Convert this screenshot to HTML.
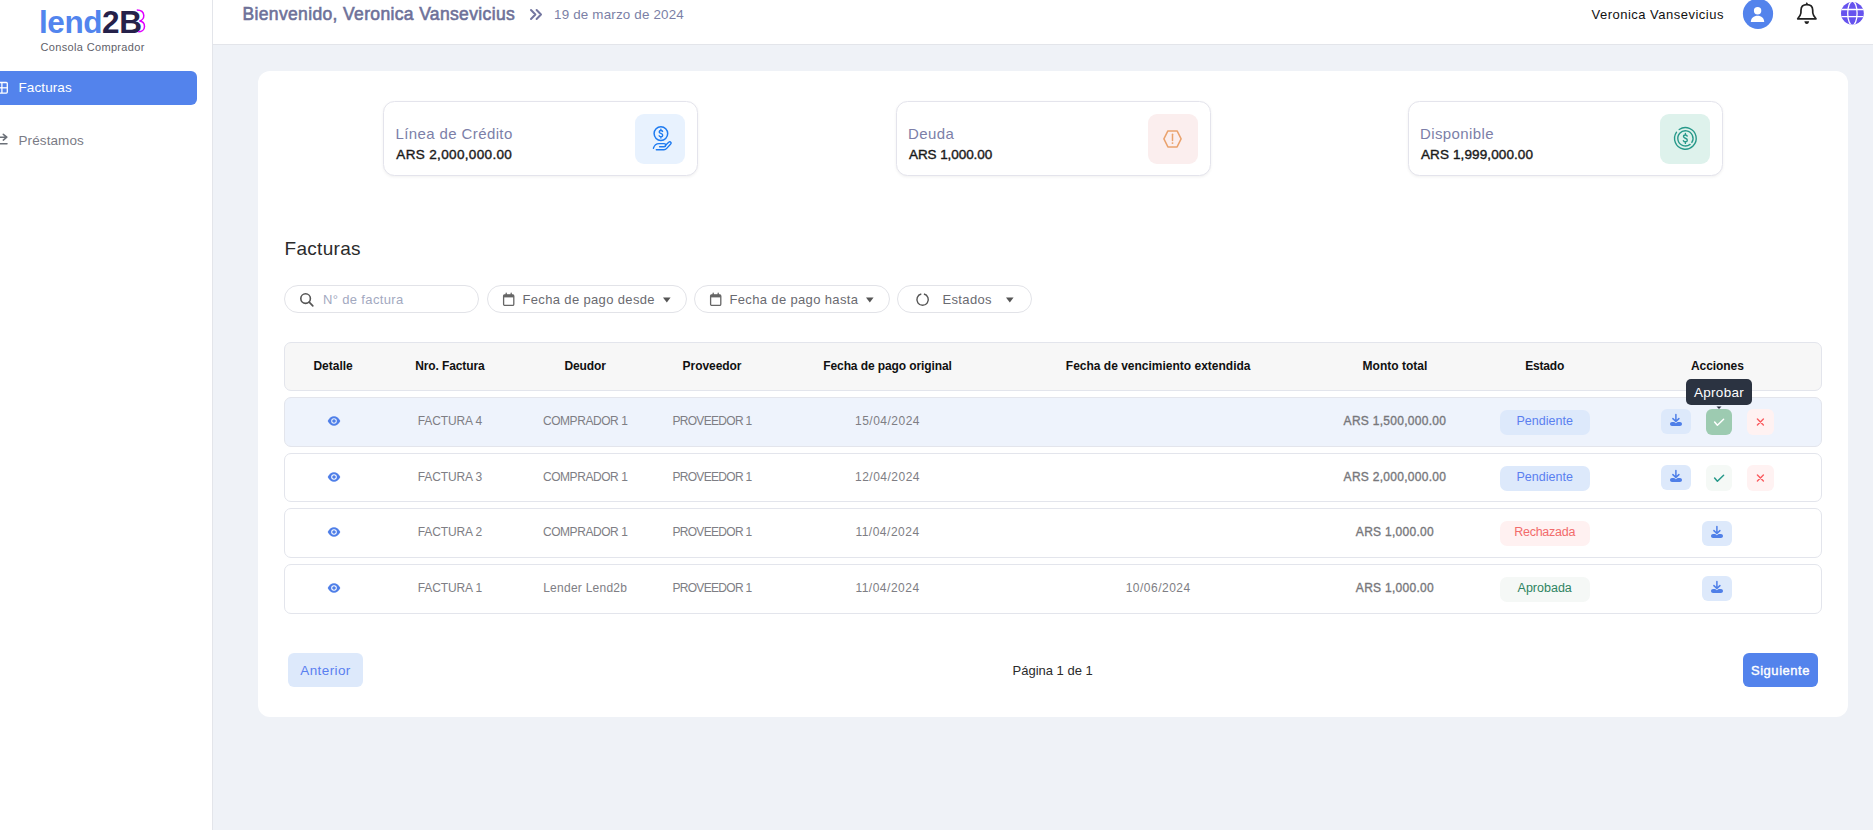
<!DOCTYPE html>
<html>
<head>
<meta charset="utf-8">
<style>
*{box-sizing:border-box;margin:0;padding:0}
html,body{width:1873px;height:830px;overflow:hidden}
body{background:#EFF2F7;font-family:"Liberation Sans",sans-serif;position:relative}
.abs{position:absolute}
.t{position:absolute;white-space:nowrap;line-height:1}
#side{position:absolute;left:0;top:0;width:213px;height:830px;background:#fff;border-right:1px solid #E3E5EA}
#hdr{position:absolute;left:213px;top:0;width:1660px;height:45px;background:#fff;border-bottom:1px solid #E3E5EA}
#card{position:absolute;left:258px;top:71px;width:1590px;height:646px;background:#fff;border-radius:12px}
.stat{position:absolute;top:101px;width:315px;height:75px;border:1px solid #E4E4EC;border-radius:11.5px;background:#fff;box-shadow:0 1px 3px rgba(0,0,0,0.06)}
.stat .ib{position:absolute;right:12px;top:12px;width:50px;height:50px;border-radius:9px}
.filter{position:absolute;top:285px;height:28px;border:1px solid #E2E3E8;border-radius:14px;background:#fff}
.row{position:absolute;left:284px;width:1538px;border:1px solid #E3E5EC;border-radius:7px;background:#fff}
.hd{font-weight:700;font-size:12px;color:#111}
.cell{font-size:12px;color:#7E7E82}
.badge{position:absolute;width:90px;height:25px;border-radius:7px}
.btn{position:absolute;border-radius:6px}
</style>
</head>
<body>
<div id="side">
  <div class="t" style="left:39px;top:7px;font-size:31.5px;font-weight:700;letter-spacing:-0.42px;color:#5285EE">lend<span style="color:#25214A">2B</span></div>
  <svg class="abs" style="left:134px;top:8px" width="14" height="27" viewBox="0 0 14 27"><path d="M2.8 2.1C6.6 2.1 9.6 3.9 9.8 7.5C9.9 10.3 7.9 12.6 5.4 12.9C8.4 13.2 10.5 15.4 10.5 18.4C10.5 21.7 7.6 23.7 4.2 23.7" fill="none" stroke="#E000FF" stroke-width="1.5"/></svg>
  <div class="t" style="left:40.5px;top:42.4px;font-size:11px;letter-spacing:0.34px;color:#5F5F6A">Consola Comprador</div>
  <div class="abs" style="left:-20px;top:71px;width:217px;height:34px;border-radius:6px;background:#5383EC"></div>
  <svg class="abs" style="left:-5px;top:81px" width="14" height="13" viewBox="0 0 14 13"><rect x="1.3" y="1.5" width="11" height="10.6" rx="1" fill="none" stroke="#fff" stroke-width="1.3"/><line x1="6.9" y1="1.5" x2="6.9" y2="12" stroke="#fff" stroke-width="1.3"/><line x1="1.3" y1="6.8" x2="12.3" y2="6.8" stroke="#fff" stroke-width="1.3"/></svg>
  <div class="t" style="left:18.5px;top:80.9px;font-size:13.5px;letter-spacing:0.1px;color:#fff">Facturas</div>
  <svg class="abs" style="left:-8px;top:132px" width="18" height="14" viewBox="0 0 18 14"><path d="M1 5.2H14.5M11.3 2.3L14.8 5.2L11.3 8.1" fill="none" stroke="#6B7078" stroke-width="1.5" stroke-linecap="round" stroke-linejoin="round"/><path d="M15 11.8H3M5.5 9.2L2.8 11.8" fill="none" stroke="#6B7078" stroke-width="1.5" stroke-linecap="round"/></svg>
  <div class="t" style="left:18.5px;top:133.6px;font-size:13.5px;letter-spacing:0.1px;color:#7A7B85">Préstamos</div>
</div>
<div id="hdr"></div>
<div class="t" style="left:242.5px;top:6.4px;font-size:17.5px;letter-spacing:0.35px;color:#6E7199;-webkit-text-stroke:0.6px #6E7199">Bienvenido, Veronica Vansevicius</div>
<svg class="abs" style="left:528px;top:7px" width="16" height="15" viewBox="0 0 16 15"><path d="M3 3L7.4 7.5L3 12M8.6 3L13 7.5L8.6 12" fill="none" stroke="#7376A0" stroke-width="2" stroke-linecap="round" stroke-linejoin="round"/></svg>
<div class="t" style="left:554px;top:7.7px;font-size:13.4px;letter-spacing:0.18px;color:#7B7FA6">19 de marzo de 2024</div>
<div class="t" style="left:1591.5px;top:7.6px;font-size:13px;letter-spacing:0.49px;color:#111">Veronica Vansevicius</div>
<svg class="abs" style="left:1742px;top:-2px" width="32" height="32" viewBox="0 0 32 32"><circle cx="16" cy="15.8" r="15.1" fill="#5383EC"/><circle cx="15.6" cy="12.7" r="3.7" fill="#fff"/><path d="M8.8 24.1C8.8 20.2 11.8 17.8 15.6 17.8C19.4 17.8 22.2 20.2 22.2 24.1Z" fill="#fff"/></svg>
<svg class="abs" style="left:1795px;top:0px" width="24" height="26" viewBox="0 0 24 26"><path d="M2.7 18.8H21C19.4 17 18 15.2 17.8 13L17.7 10C17.6 6.8 15.3 4.7 11.85 4.7C8.4 4.7 6.1 6.8 6 10L5.9 13C5.7 15.2 4.3 17 2.7 18.8Z" fill="none" stroke="#222" stroke-width="1.7" stroke-linejoin="round"/><path d="M10.4 4.6L11.8 2L13.3 4.6Z" fill="#222"/><path d="M9.4 21.3H14.1C14 22.9 13.1 24 11.75 24C10.4 24 9.5 22.9 9.4 21.3Z" fill="#222"/></svg>
<svg class="abs" style="left:1840px;top:0px" width="25" height="26" viewBox="0 0 25 26"><defs><clipPath id="gc"><circle cx="12.4" cy="13.3" r="11.4"/></clipPath></defs><circle cx="12.4" cy="13.3" r="11.4" fill="#6653EE"/><g clip-path="url(#gc)" stroke="#fff" stroke-width="1.3" fill="none"><ellipse cx="12.4" cy="13.3" rx="4.7" ry="12"/><line x1="0" y1="9.5" x2="25" y2="9.5"/><line x1="0" y1="16.6" x2="25" y2="16.6"/></g></svg>
<div id="card"></div>
<div class="stat" style="left:383px"></div>
<div class="stat" style="left:896px"></div>
<div class="stat" style="left:1408px"></div>
<div class="abs" style="left:635px;top:113.5px;width:50px;height:50px;border-radius:9px;background:#E8F2FE"></div>
<div class="abs" style="left:1148px;top:113.5px;width:50px;height:50px;border-radius:9px;background:#FBEEEE"></div>
<div class="abs" style="left:1660px;top:113.5px;width:50px;height:50px;border-radius:9px;background:#DEF2EC"></div>
<svg class="abs" style="left:648px;top:124px" width="26" height="30" viewBox="0 0 26 30"><circle cx="12.9" cy="9.6" r="6.8" fill="none" stroke="#1E7BF0" stroke-width="1.5"/><path d="M14.6 7.4C14.3 6.8 13.7 6.5 12.9 6.5C11.9 6.5 11.2 7.1 11.2 7.9C11.2 9.8 14.7 9.1 14.7 11.2C14.7 12.1 13.9 12.8 12.9 12.8C12.1 12.8 11.4 12.4 11.1 11.8M12.9 5.3V6.5M12.9 12.8V14.1" fill="none" stroke="#1E7BF0" stroke-width="1.4" stroke-linecap="round"/><path d="M5.4 24.3C6.3 21.3 8.4 19.6 11 19.6H16.1C17 19.6 17.7 20.3 17.7 21.15C17.7 22 17 22.7 16.1 22.7H11.6" fill="none" stroke="#1E7BF0" stroke-width="1.4" stroke-linecap="round" stroke-linejoin="round"/><path d="M17.3 21.4L20.7 18.2C21.3 17.6 22.3 17.6 22.8 18.2C23.3 18.7 23.2 19.5 22.7 20L18.7 24.4C18 25.2 17 25.7 16 25.7H8.3" fill="none" stroke="#1E7BF0" stroke-width="1.4" stroke-linecap="round" stroke-linejoin="round"/></svg>
<svg class="abs" style="left:1160px;top:126px" width="26" height="26" viewBox="0 0 26 26"><path d="M7.9 4.9H17.1L21.1 12.9L17.1 20.9H7.9L3.9 12.9Z" fill="none" stroke="#EAA26D" stroke-width="1.5" stroke-linejoin="round"/><path d="M12.5 8.3V14.6" stroke="#EAA26D" stroke-width="1.5" stroke-linecap="round"/><circle cx="12.5" cy="17.1" r="0.95" fill="#EAA26D"/></svg>
<svg class="abs" style="left:1672px;top:125px" width="27" height="27" viewBox="0 0 27 27"><path d="M7.21 4.55A10.8 10.8 0 1 1 4.55 7.21" fill="none" stroke="#27998A" stroke-width="1.4" stroke-linecap="round"/><path d="M18.08 19.39A7.6 7.6 0 1 1 19.85 17.43" fill="none" stroke="#27998A" stroke-width="1.4" stroke-linecap="round"/><path d="M15.2 11.1C14.9 10.4 14.2 10 13.4 10C12.3 10 11.5 10.7 11.5 11.6C11.5 13.6 15.3 12.9 15.3 15.2C15.3 16.1 14.4 16.8 13.4 16.8C12.5 16.8 11.7 16.4 11.4 15.7M13.4 8.5V10M13.4 16.8V18.4" fill="none" stroke="#27998A" stroke-width="1.4" stroke-linecap="round"/></svg>
<div class="t" style="left:395.5px;top:126.3px;font-size:15px;letter-spacing:0.39px;color:#7C7FA8">Línea de Crédito</div>
<div class="t" style="left:396.3px;top:147.8px;font-size:13.5px;letter-spacing:0.35px;color:#1A1A1A;-webkit-text-stroke:0.4px #1A1A1A">ARS 2,000,000.00</div>
<div class="t" style="left:908px;top:126.3px;font-size:15px;letter-spacing:0.39px;color:#7C7FA8">Deuda</div>
<div class="t" style="left:909px;top:147.8px;font-size:13.5px;letter-spacing:-0.08px;color:#1A1A1A;-webkit-text-stroke:0.4px #1A1A1A">ARS 1,000.00</div>
<div class="t" style="left:1420px;top:126.3px;font-size:15px;letter-spacing:0.39px;color:#7C7FA8">Disponible</div>
<div class="t" style="left:1421px;top:147.8px;font-size:13.5px;letter-spacing:0.11px;color:#1A1A1A;-webkit-text-stroke:0.4px #1A1A1A">ARS 1,999,000.00</div>
<div class="t" style="left:284.5px;top:239px;font-size:19px;letter-spacing:0.3px;color:#2B2B2B">Facturas</div>
<div class="filter" style="left:284px;width:195px"></div>
<div class="filter" style="left:487px;width:200px"></div>
<div class="filter" style="left:694px;width:196px"></div>
<div class="filter" style="left:897px;width:135px"></div>
<svg class="abs" style="left:299px;top:292px" width="16" height="16" viewBox="0 0 16 16"><circle cx="6.6" cy="6.6" r="4.8" fill="none" stroke="#555" stroke-width="1.6"/><path d="M10.2 10.2L13.8 13.8" stroke="#555" stroke-width="1.7" stroke-linecap="round"/></svg>
<div class="t" style="left:323px;top:292.8px;font-size:13px;letter-spacing:0.35px;color:#A3A9BF">N° de factura</div>
<svg class="abs" style="left:502px;top:292px" width="14" height="15" viewBox="0 0 14 15"><rect x="1.6" y="2.8" width="10.2" height="10.6" rx="1.2" fill="none" stroke="#666" stroke-width="1.3"/><rect x="1.6" y="2.8" width="10.2" height="2.6" fill="#666"/><path d="M4.2 1.2V3.5M9.2 1.2V3.5" stroke="#666" stroke-width="1.3" stroke-linecap="round"/></svg>
<div class="t" style="left:522.5px;top:293px;font-size:13px;letter-spacing:0.35px;color:#6A6A70">Fecha de pago desde</div>
<svg class="abs" style="left:662px;top:296px" width="10" height="8" viewBox="0 0 10 8"><path d="M1 1.6H8.6L4.8 6.4Z" fill="#555"/></svg>
<svg class="abs" style="left:709px;top:292px" width="14" height="15" viewBox="0 0 14 15"><rect x="1.6" y="2.8" width="10.2" height="10.6" rx="1.2" fill="none" stroke="#666" stroke-width="1.3"/><rect x="1.6" y="2.8" width="10.2" height="2.6" fill="#666"/><path d="M4.2 1.2V3.5M9.2 1.2V3.5" stroke="#666" stroke-width="1.3" stroke-linecap="round"/></svg>
<div class="t" style="left:729.5px;top:293px;font-size:13px;letter-spacing:0.35px;color:#6A6A70">Fecha de pago hasta</div>
<svg class="abs" style="left:865px;top:296px" width="10" height="8" viewBox="0 0 10 8"><path d="M1 1.6H8.6L4.8 6.4Z" fill="#555"/></svg>
<svg class="abs" style="left:914px;top:292px" width="16" height="16" viewBox="0 0 16 16"><path d="M7.3 2.03A5.7 5.7 0 1 0 9.9 2.03" fill="none" stroke="#555" stroke-width="1.4"/></svg>
<div class="t" style="left:942.5px;top:293px;font-size:13px;letter-spacing:0.35px;color:#6A6A70">Estados</div>
<svg class="abs" style="left:1005px;top:296px" width="10" height="8" viewBox="0 0 10 8"><path d="M1 1.6H8.6L4.8 6.4Z" fill="#555"/></svg>
<div class="row" style="top:342px;height:49px;background:#F7F7F7"></div>
<div class="row" style="top:397px;height:50px;background:#EEF3FC"></div>
<div class="row" style="top:453px;height:49px;background:#fff"></div>
<div class="row" style="top:508px;height:50px;background:#fff"></div>
<div class="row" style="top:564px;height:50px;background:#fff"></div>
<div class="t" style="left:183.1px;width:300px;text-align:center;top:359.9px;font-size:12px;font-weight:700;letter-spacing:0px;color:#111">Detalle</div>
<div class="t" style="left:299.9px;width:300px;text-align:center;top:359.9px;font-size:12px;font-weight:700;letter-spacing:-0.12px;color:#111">Nro. Factura</div>
<div class="t" style="left:435.2px;width:300px;text-align:center;top:359.9px;font-size:12px;font-weight:700;letter-spacing:-0.08px;color:#111">Deudor</div>
<div class="t" style="left:562.0px;width:300px;text-align:center;top:359.9px;font-size:12px;font-weight:700;letter-spacing:-0.06px;color:#111">Proveedor</div>
<div class="t" style="left:737.5px;width:300px;text-align:center;top:359.9px;font-size:12px;font-weight:700;letter-spacing:-0.1px;color:#111">Fecha de pago original</div>
<div class="t" style="left:1008.2px;width:300px;text-align:center;top:359.9px;font-size:12px;font-weight:700;letter-spacing:0px;color:#111">Fecha de vencimiento extendida</div>
<div class="t" style="left:1244.9px;width:300px;text-align:center;top:359.9px;font-size:12px;font-weight:700;letter-spacing:0px;color:#111">Monto total</div>
<div class="t" style="left:1394.7px;width:300px;text-align:center;top:359.9px;font-size:12px;font-weight:700;letter-spacing:-0.2px;color:#111">Estado</div>
<div class="t" style="left:1567.4px;width:300px;text-align:center;top:359.9px;font-size:12px;font-weight:700;letter-spacing:-0.08px;color:#111">Acciones</div>
<svg class="abs" style="left:325.5px;top:414.8px" width="16" height="12" viewBox="0 0 16 12"><path d="M1.7 6C3.2 3.1 5.4 1.2 8 1.2C10.6 1.2 12.8 3.1 14.3 6C12.8 8.9 10.6 10.8 8 10.8C5.4 10.8 3.2 8.9 1.7 6Z" fill="#4F7FE8"/><circle cx="8" cy="6" r="2.8" fill="#EEF3FC"/><circle cx="8" cy="6" r="1.8" fill="#4F7FE8"/></svg>
<div class="t" style="left:299.9px;width:300px;text-align:center;top:414.6px;font-size:12px;letter-spacing:-0.1px;color:#7E7E84">FACTURA 4</div>
<div class="t" style="left:435.2px;width:300px;text-align:center;top:414.6px;font-size:12px;letter-spacing:-0.44px;color:#7E7E84">COMPRADOR 1</div>
<div class="t" style="left:562.0px;width:300px;text-align:center;top:414.6px;font-size:12px;letter-spacing:-0.68px;color:#7E7E84">PROVEEDOR 1</div>
<div class="t" style="left:737.5px;width:300px;text-align:center;top:414.6px;font-size:12px;letter-spacing:0.5px;color:#7E7E84">15/04/2024</div>
<div class="t" style="left:1244.9px;width:300px;text-align:center;top:414.6px;font-size:12px;letter-spacing:0.28px;color:#77777B;-webkit-text-stroke:0.35px #77777B">ARS 1,500,000.00</div>
<div class="badge" style="left:1500px;top:410.3px;background:#DDE9FB"></div>
<div class="t" style="left:1394.7px;width:300px;text-align:center;top:415.2px;font-size:12.5px;letter-spacing:0px;color:#5A7FF0">Pendiente</div>
<svg class="abs" style="left:325.5px;top:470.7px" width="16" height="12" viewBox="0 0 16 12"><path d="M1.7 6C3.2 3.1 5.4 1.2 8 1.2C10.6 1.2 12.8 3.1 14.3 6C12.8 8.9 10.6 10.8 8 10.8C5.4 10.8 3.2 8.9 1.7 6Z" fill="#4F7FE8"/><circle cx="8" cy="6" r="2.8" fill="#fff"/><circle cx="8" cy="6" r="1.8" fill="#4F7FE8"/></svg>
<div class="t" style="left:299.9px;width:300px;text-align:center;top:470.5px;font-size:12px;letter-spacing:-0.1px;color:#7E7E84">FACTURA 3</div>
<div class="t" style="left:435.2px;width:300px;text-align:center;top:470.5px;font-size:12px;letter-spacing:-0.44px;color:#7E7E84">COMPRADOR 1</div>
<div class="t" style="left:562.0px;width:300px;text-align:center;top:470.5px;font-size:12px;letter-spacing:-0.68px;color:#7E7E84">PROVEEDOR 1</div>
<div class="t" style="left:737.5px;width:300px;text-align:center;top:470.5px;font-size:12px;letter-spacing:0.5px;color:#7E7E84">12/04/2024</div>
<div class="t" style="left:1244.9px;width:300px;text-align:center;top:470.5px;font-size:12px;letter-spacing:0.28px;color:#77777B;-webkit-text-stroke:0.35px #77777B">ARS 2,000,000.00</div>
<div class="badge" style="left:1500px;top:466.2px;background:#DDE9FB"></div>
<div class="t" style="left:1394.7px;width:300px;text-align:center;top:471.1px;font-size:12.5px;letter-spacing:0px;color:#5A7FF0">Pendiente</div>
<svg class="abs" style="left:325.5px;top:525.9px" width="16" height="12" viewBox="0 0 16 12"><path d="M1.7 6C3.2 3.1 5.4 1.2 8 1.2C10.6 1.2 12.8 3.1 14.3 6C12.8 8.9 10.6 10.8 8 10.8C5.4 10.8 3.2 8.9 1.7 6Z" fill="#4F7FE8"/><circle cx="8" cy="6" r="2.8" fill="#fff"/><circle cx="8" cy="6" r="1.8" fill="#4F7FE8"/></svg>
<div class="t" style="left:299.9px;width:300px;text-align:center;top:525.7px;font-size:12px;letter-spacing:-0.1px;color:#7E7E84">FACTURA 2</div>
<div class="t" style="left:435.2px;width:300px;text-align:center;top:525.7px;font-size:12px;letter-spacing:-0.44px;color:#7E7E84">COMPRADOR 1</div>
<div class="t" style="left:562.0px;width:300px;text-align:center;top:525.7px;font-size:12px;letter-spacing:-0.68px;color:#7E7E84">PROVEEDOR 1</div>
<div class="t" style="left:737.5px;width:300px;text-align:center;top:525.7px;font-size:12px;letter-spacing:0.5px;color:#7E7E84">11/04/2024</div>
<div class="t" style="left:1244.9px;width:300px;text-align:center;top:525.7px;font-size:12px;letter-spacing:0.28px;color:#77777B;-webkit-text-stroke:0.35px #77777B">ARS 1,000.00</div>
<div class="badge" style="left:1500px;top:521.4px;background:#FFF1F1"></div>
<div class="t" style="left:1394.7px;width:300px;text-align:center;top:526.3px;font-size:12.5px;letter-spacing:-0.25px;color:#F26B6B">Rechazada</div>
<svg class="abs" style="left:325.5px;top:581.8px" width="16" height="12" viewBox="0 0 16 12"><path d="M1.7 6C3.2 3.1 5.4 1.2 8 1.2C10.6 1.2 12.8 3.1 14.3 6C12.8 8.9 10.6 10.8 8 10.8C5.4 10.8 3.2 8.9 1.7 6Z" fill="#4F7FE8"/><circle cx="8" cy="6" r="2.8" fill="#fff"/><circle cx="8" cy="6" r="1.8" fill="#4F7FE8"/></svg>
<div class="t" style="left:299.9px;width:300px;text-align:center;top:581.6px;font-size:12px;letter-spacing:-0.1px;color:#7E7E84">FACTURA 1</div>
<div class="t" style="left:435.2px;width:300px;text-align:center;top:581.6px;font-size:12px;letter-spacing:0.25px;color:#7E7E84">Lender Lend2b</div>
<div class="t" style="left:562.0px;width:300px;text-align:center;top:581.6px;font-size:12px;letter-spacing:-0.68px;color:#7E7E84">PROVEEDOR 1</div>
<div class="t" style="left:737.5px;width:300px;text-align:center;top:581.6px;font-size:12px;letter-spacing:0.5px;color:#7E7E84">11/04/2024</div>
<div class="t" style="left:1008.2px;width:300px;text-align:center;top:581.6px;font-size:12px;letter-spacing:0.5px;color:#7E7E84">10/06/2024</div>
<div class="t" style="left:1244.9px;width:300px;text-align:center;top:581.6px;font-size:12px;letter-spacing:0.28px;color:#77777B;-webkit-text-stroke:0.35px #77777B">ARS 1,000.00</div>
<div class="badge" style="left:1500px;top:577.3px;background:#F5F8F6"></div>
<div class="t" style="left:1394.7px;width:300px;text-align:center;top:582.2px;font-size:12.5px;letter-spacing:0px;color:#2F8462">Aprobada</div>
<div class="btn" style="left:1661px;top:409px;width:30px;height:25px;background:#DDE9FB"></div><svg class="abs" style="left:1669px;top:413px" width="14" height="14" viewBox="0 0 14 14"><path d="M6.9 1.6V8.2M3.9 5.6L6.9 8.5L9.9 5.6" fill="none" stroke="#4F7FE8" stroke-width="1.5" stroke-linecap="round" stroke-linejoin="round"/><path d="M3 8.9H5.2L6.9 10.3L8.6 8.9H11C12.1 8.9 13 9.8 13 10.9C13 12 12.1 12.9 11 12.9H3C1.9 12.9 1 12 1 10.9C1 9.8 1.9 8.9 3 8.9Z" fill="#4F7FE8"/></svg>
<div class="btn" style="left:1706px;top:409px;width:26px;height:25.5px;background:#9DCBB1"></div><svg class="abs" style="left:1712px;top:415.5px" width="14" height="12" viewBox="0 0 14 12"><path d="M2.6 6L5.4 9.3L11.6 3.3" fill="none" stroke="#fff" stroke-width="1.5" stroke-linecap="round" stroke-linejoin="round"/></svg>
<div class="btn" style="left:1747px;top:409px;width:27px;height:26px;background:#FFF2F2"></div><svg class="abs" style="left:1755px;top:416.5px" width="11" height="11" viewBox="0 0 11 11"><path d="M2.4 2.1L8.4 8.1M8.4 2.1L2.4 8.1" fill="none" stroke="#FA5C60" stroke-width="1.4" stroke-linecap="round"/></svg>
<div class="btn" style="left:1661px;top:465px;width:30px;height:25px;background:#DDE9FB"></div><svg class="abs" style="left:1669px;top:469px" width="14" height="14" viewBox="0 0 14 14"><path d="M6.9 1.6V8.2M3.9 5.6L6.9 8.5L9.9 5.6" fill="none" stroke="#4F7FE8" stroke-width="1.5" stroke-linecap="round" stroke-linejoin="round"/><path d="M3 8.9H5.2L6.9 10.3L8.6 8.9H11C12.1 8.9 13 9.8 13 10.9C13 12 12.1 12.9 11 12.9H3C1.9 12.9 1 12 1 10.9C1 9.8 1.9 8.9 3 8.9Z" fill="#4F7FE8"/></svg>
<div class="btn" style="left:1706px;top:465px;width:26px;height:25.5px;background:#F5F9F6"></div><svg class="abs" style="left:1712px;top:471.5px" width="14" height="12" viewBox="0 0 14 12"><path d="M2.6 6L5.4 9.3L11.6 3.3" fill="none" stroke="#27998A" stroke-width="1.5" stroke-linecap="round" stroke-linejoin="round"/></svg>
<div class="btn" style="left:1747px;top:465px;width:27px;height:26px;background:#FFF2F2"></div><svg class="abs" style="left:1755px;top:472.5px" width="11" height="11" viewBox="0 0 11 11"><path d="M2.4 2.1L8.4 8.1M8.4 2.1L2.4 8.1" fill="none" stroke="#FA5C60" stroke-width="1.4" stroke-linecap="round"/></svg>
<div class="btn" style="left:1702px;top:521px;width:30px;height:25px;background:#DDE9FB"></div><svg class="abs" style="left:1710px;top:525px" width="14" height="14" viewBox="0 0 14 14"><path d="M6.9 1.6V8.2M3.9 5.6L6.9 8.5L9.9 5.6" fill="none" stroke="#4F7FE8" stroke-width="1.5" stroke-linecap="round" stroke-linejoin="round"/><path d="M3 8.9H5.2L6.9 10.3L8.6 8.9H11C12.1 8.9 13 9.8 13 10.9C13 12 12.1 12.9 11 12.9H3C1.9 12.9 1 12 1 10.9C1 9.8 1.9 8.9 3 8.9Z" fill="#4F7FE8"/></svg>
<div class="btn" style="left:1702px;top:576px;width:30px;height:25px;background:#DDE9FB"></div><svg class="abs" style="left:1710px;top:580px" width="14" height="14" viewBox="0 0 14 14"><path d="M6.9 1.6V8.2M3.9 5.6L6.9 8.5L9.9 5.6" fill="none" stroke="#4F7FE8" stroke-width="1.5" stroke-linecap="round" stroke-linejoin="round"/><path d="M3 8.9H5.2L6.9 10.3L8.6 8.9H11C12.1 8.9 13 9.8 13 10.9C13 12 12.1 12.9 11 12.9H3C1.9 12.9 1 12 1 10.9C1 9.8 1.9 8.9 3 8.9Z" fill="#4F7FE8"/></svg>
<div class="abs" style="left:1686px;top:379px;width:66px;height:26px;border-radius:5px;background:#2B3341"></div>
<svg class="abs" style="left:1715px;top:405px" width="8" height="5" viewBox="0 0 8 5"><path d="M1.5 1.5H6.5L4 4Z" fill="#2B3341"/></svg>
<div class="t" style="left:1669px;width:100px;text-align:center;top:385.6px;font-size:13.5px;letter-spacing:0.3px;color:#fff">Aprobar</div>
<div class="btn" style="left:288px;top:653px;width:75px;height:34px;background:#DDE9FB"></div>
<div class="t" style="left:275.5px;width:100px;text-align:center;top:663.5px;font-size:13.5px;letter-spacing:0.39px;color:#5A7FF0">Anterior</div>
<div class="t" style="left:1012.5px;top:664px;font-size:13px;color:#2B2B2B">Página 1 de 1</div>
<div class="btn" style="left:1743px;top:653px;width:75px;height:34px;background:#5383EC"></div>
<div class="t" style="left:1730.5px;width:100px;text-align:center;top:664px;font-size:13px;letter-spacing:0.54px;color:#fff;-webkit-text-stroke:0.4px #fff">Siguiente</div>
</body>
</html>
